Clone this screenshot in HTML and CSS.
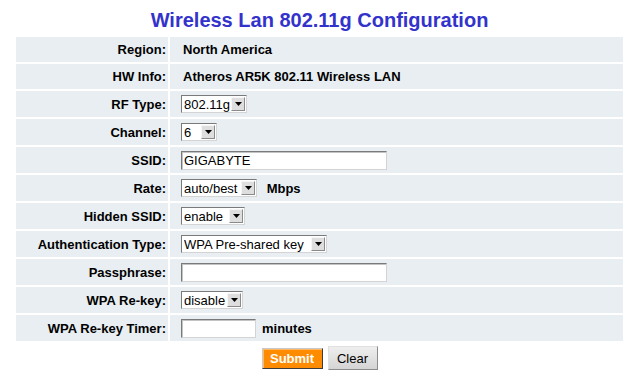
FILE: index.html
```html
<!DOCTYPE html>
<html lang="en">
<head>
  <meta charset="UTF-8" />
  <title>Wireless Lan 802.11g Configuration</title>
  <link rel="stylesheet" href="styles.css">
</head>
<body>
  <form class="page">
    <h1>Wireless Lan 802.11g Configuration</h1>
    <table class="cfg">
      <tr class="txt">
        <td class="lbl">Region:</td>
        <td class="val info">North America</td>
      </tr>
      <tr class="txt">
        <td class="lbl">HW Info:</td>
        <td class="val info">Atheros AR5K 802.11 Wireless LAN</td>
      </tr>
      <tr>
        <td class="lbl">RF Type:</td>
        <td class="val">
          <span class="sel"><select class="w-rf"><option>802.11g</option><option>802.11b</option></select><span class="arr"><svg width="7" height="4" viewBox="0 0 7 4"><path d="M0 0h7L3.5 4z" fill="#000"/></svg></span></span>
        </td>
      </tr>
      <tr>
        <td class="lbl">Channel:</td>
        <td class="val">
          <span class="sel"><select class="w-ch"><option>6</option><option>1</option><option>11</option></select><span class="arr"><svg width="7" height="4" viewBox="0 0 7 4"><path d="M0 0h7L3.5 4z" fill="#000"/></svg></span></span>
        </td>
      </tr>
      <tr>
        <td class="lbl">SSID:</td>
        <td class="val"><input type="text" class="long" value="GIGABYTE"></td>
      </tr>
      <tr>
        <td class="lbl">Rate:</td>
        <td class="val">
          <span class="sel"><select class="w-rate"><option>auto/best</option><option>54</option></select><span class="arr"><svg width="7" height="4" viewBox="0 0 7 4"><path d="M0 0h7L3.5 4z" fill="#000"/></svg></span></span>
          <span class="unit">Mbps</span>
        </td>
      </tr>
      <tr>
        <td class="lbl">Hidden SSID:</td>
        <td class="val">
          <span class="sel"><select class="w-hid"><option>enable</option><option>disable</option></select><span class="arr"><svg width="7" height="4" viewBox="0 0 7 4"><path d="M0 0h7L3.5 4z" fill="#000"/></svg></span></span>
        </td>
      </tr>
      <tr>
        <td class="lbl">Authentication Type:</td>
        <td class="val">
          <span class="sel"><select class="w-auth"><option>WPA Pre-shared key</option><option>Open System</option></select><span class="arr"><svg width="7" height="4" viewBox="0 0 7 4"><path d="M0 0h7L3.5 4z" fill="#000"/></svg></span></span>
        </td>
      </tr>
      <tr>
        <td class="lbl">Passphrase:</td>
        <td class="val"><input type="text" class="long" value=""></td>
      </tr>
      <tr>
        <td class="lbl">WPA Re-key:</td>
        <td class="val">
          <span class="sel"><select class="w-rekey"><option>disable</option><option>enable</option></select><span class="arr"><svg width="7" height="4" viewBox="0 0 7 4"><path d="M0 0h7L3.5 4z" fill="#000"/></svg></span></span>
        </td>
      </tr>
      <tr>
        <td class="lbl">WPA Re-key Timer:</td>
        <td class="val"><input type="text" class="short" value=""><span class="unit">minutes</span></td>
      </tr>
    </table>
    <div class="buttons">
      <button type="button" class="submit">Submit</button>
      <button type="reset" class="clear">Clear</button>
    </div>
  </form>
</body>
</html>
```

FILE: styles.css
```css
body {
  margin: 0;
  font-family: "Liberation Sans", Arial, sans-serif;
  background: #fff;
}
.page {
  width: 611px;
  margin: 0 0 0 14px;
  padding-top: 8px;
}
h1 {
  margin: 0 0 3px;
  font-size: 20px;
  line-height: 24px;
  text-align: center;
  color: #3333cc;
}
.cfg {
  width: 611px;
  border-spacing: 2px;
}
.cfg td {
  background: #e8eef1;
  height: 26px;
  padding: 0;
  vertical-align: middle;
  font-size: 13px;
  font-weight: bold;
  color: #000;
}
.cfg tr.txt td {
  height: 25px;
}
.lbl {
  width: 150px;
  text-align: right;
  padding-right: 2px !important;
}
.val {
  padding-left: 11px !important;
}
.info {
  padding-left: 13px !important;
}
.sel {
  position: relative;
  display: inline-block;
  vertical-align: middle;
}
select, input {
  font-family: "Liberation Sans", Arial, sans-serif;
  font-size: 13px;
  color: #000;
  background: #fff;
  border: 1px solid;
  border-color: #7a7a7a #d4d4d4 #d4d4d4 #7a7a7a;
  box-sizing: border-box;
  margin: 0;
  vertical-align: middle;
}
select {
  appearance: none;
  -webkit-appearance: none;
  height: 18px;
  padding: 0 0 0 2px;
  border-radius: 0;
  outline: none;
}
.arr {
  position: absolute;
  top: 2px;
  right: 2px;
  width: 14px;
  height: 14px;
  box-sizing: border-box;
  background: #dedede;
  border: 1px solid;
  border-color: #f6f6f6 #8a8a8a #8a8a8a #f6f6f6;
  display: flex;
  align-items: center;
  justify-content: center;
  pointer-events: none;
}
.w-rf { width: 66px; }
.w-ch { width: 36px; }
.w-rate { width: 76px; }
.w-hid { width: 64px; }
.w-auth { width: 146px; }
.w-rekey { width: 62px; }
input {
  height: 19px;
  padding: 0 2px;
  box-shadow: inset 1px 1px 0 #c4c4c4;
}
input.long { width: 206px; }
input.short { width: 75px; }
.unit {
  margin-left: 6px;
  vertical-align: middle;
}
.buttons {
  display: flex;
  justify-content: center;
  align-items: center;
  gap: 5px;
  margin-top: 3px;
}
button {
  font-family: "Liberation Sans", Arial, sans-serif;
  font-size: 13px;
  margin: 0;
  padding: 0;
  cursor: pointer;
}
.submit {
  width: 61px;
  height: 21px;
  background: #ff8c00;
  color: #fff;
  font-weight: bold;
  border: 1px solid;
  border-color: #c8c8c8 #3c3c3c #3c3c3c #c8c8c8;
  box-shadow: inset 1px 1px 0 #ffb866;
}
.clear {
  width: 50px;
  height: 24px;
  color: #000;
  background: linear-gradient(#eeeeee, #d4d4d4);
  border: 1px solid;
  border-color: #e0e0e0 #8c8c8c #8c8c8c #e0e0e0;
}
```
